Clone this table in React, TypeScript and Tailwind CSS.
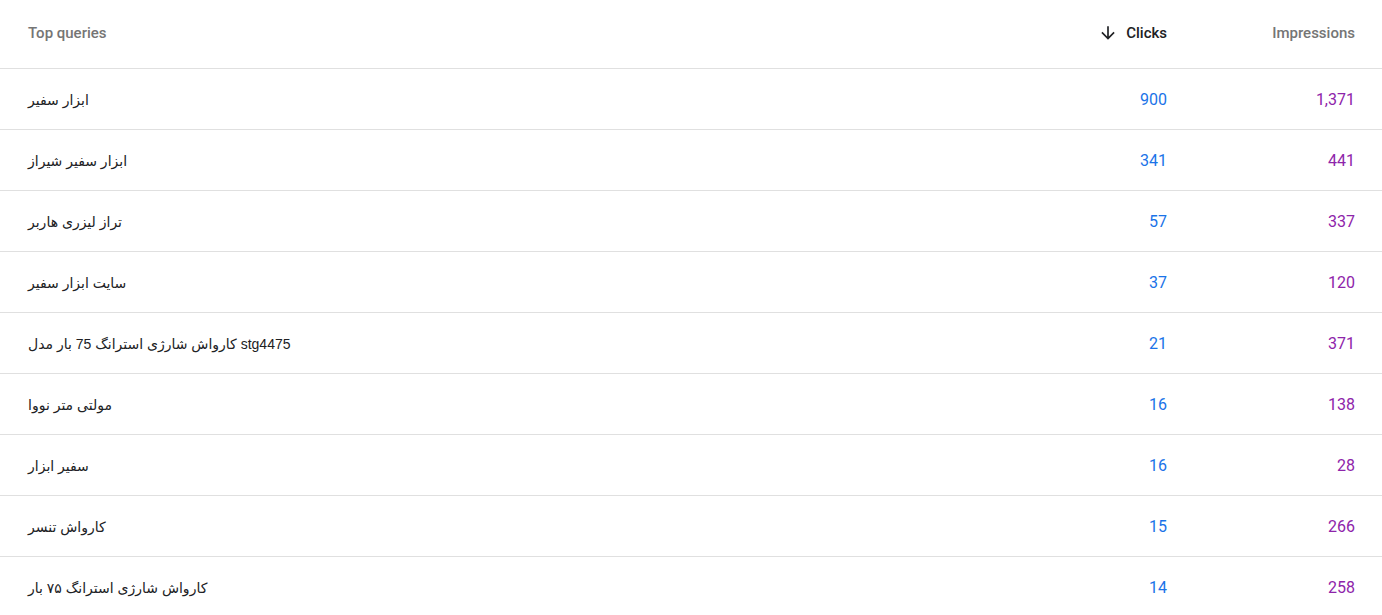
import React from 'react';

interface QueryRow {
  query: string;
  clicks: string;
  impressions: string;
}

const rows: QueryRow[] = [
  { query: 'ابزار سفیر', clicks: '900', impressions: '1,371' },
  { query: 'ابزار سفیر شیراز', clicks: '341', impressions: '441' },
  { query: 'تراز لیزری هاربر', clicks: '57', impressions: '337' },
  { query: 'سایت ابزار سفیر', clicks: '37', impressions: '120' },
  { query: 'کارواش شارژی استرانگ 75 بار مدل stg4475', clicks: '21', impressions: '371' },
  { query: 'مولتی متر نووا', clicks: '16', impressions: '138' },
  { query: 'سفیر ابزار', clicks: '16', impressions: '28' },
  { query: 'کارواش تنسر', clicks: '15', impressions: '266' },
  { query: 'کارواش شارژی استرانگ ۷۵ بار', clicks: '14', impressions: '258' },
];

const ArrowDownIcon = () => (
  <svg viewBox="0 0 24 24" className="w-5 h-5 fill-[#202124]">
    <path d="M20 12l-1.41-1.41L13 16.17V4h-2v12.17l-5.58-5.59L4 12l8 8 8-8z" />
  </svg>
);

export default function App() {
  return (
    <div className="w-full bg-white font-['Roboto',sans-serif]">
      {/* Header */}
      <div className="flex items-center h-[69px] pl-7 pr-[27px] pb-[2px] border-b border-[#e0e0e0] text-[15px] font-medium">
        <div className="flex-1 text-[#757575]">Top queries</div>
        <div className="w-[160px] flex items-center justify-end gap-2 text-[#202124]">
          <ArrowDownIcon />
          <span>Clicks</span>
        </div>
        <div className="w-[188px] text-right text-[#757575]">Impressions</div>
      </div>

      {/* Rows */}
      {rows.map((row, i) => (
        <div key={i} className="flex items-center h-[61px] pl-7 pr-[27px] pt-[2px] border-b border-[#e0e0e0]">
          <div className="flex-1 text-sm text-[#202124] font-['Liberation_Sans','DejaVu_Sans',sans-serif]">{row.query}</div>
          <div className="w-[160px] text-right text-base text-[#1a73e8]">{row.clicks}</div>
          <div className="w-[188px] text-right text-base text-[#8e24aa]">{row.impressions}</div>
        </div>
      ))}
    </div>
  );
}
